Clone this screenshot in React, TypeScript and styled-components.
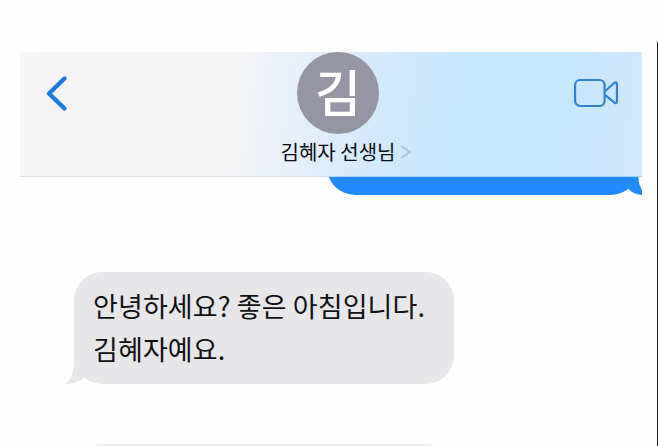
import React from "react";
import styled, { createGlobalStyle } from "styled-components";

const GlobalStyle = createGlobalStyle`
  * {
    box-sizing: border-box;
  }
  body {
    margin: 0;
    background: #fefefe;
    font-family: "Noto Sans CJK KR", "Noto Sans", sans-serif;
  }
`;

const Page = styled.div`
  display: flex;
  justify-content: space-between;
  width: 658px;
  height: 446px;
  padding-left: 20px;
  overflow: hidden;
`;

const Phone = styled.main`
  width: 622px;
  padding-top: 52px;
`;

const Edge = styled.div`
  width: 1px;
  margin-top: 42px;
  background: #29292b;
`;

const Header = styled.header`
  display: grid;
  grid-template-columns: 253px 130px 1fr;
  height: 124px;
  background: linear-gradient(
    97deg,
    #f5f5f5 0%,
    #f4f4f5 34%,
    #e6effa 45%,
    #d3eafd 57%,
    #c7e7ff 69%,
    #c7e7ff 88%,
    #d1e8fe 100%
  );
`;

//파란 말풍선 쪽으로 갈수록 옅어지는 구분선
const Divider = styled.div`
  height: 1px;
  background: linear-gradient(90deg, #dededf 0%, #d8dce2 48%, #a9cff6 52%);
`;

const IconButton = styled.button<{ $align: "start" | "end" }>`
  display: flex;
  justify-self: ${(props) => props.$align};
  align-self: start;
  padding: 0;
  border: 0;
  background: none;
  margin: ${(props) =>
    props.$align === "start" ? "23px 0 0 25px" : "24px 22px 0 0"};
`;

const Contact = styled.div`
  display: flex;
  flex-direction: column;
  align-items: center;
`;

const Avatar = styled.div`
  display: flex;
  justify-content: center;
  width: 82px;
  height: 82px;
  border-radius: 50%;
  background: #9695a3;
  color: #fff;
  font-size: 50px;
  font-weight: 500;
  line-height: 77px;
`;

const ContactName = styled.div`
  display: flex;
  align-items: center;
  gap: 5px;
  margin-left: 16px;
  color: #0b0d10;
  font-size: 20px;
  line-height: 36px;
  white-space: nowrap;
`;

const SentClip = styled.div`
  display: flex;
  align-items: flex-start;
  height: 20px;
  padding-left: 307px;
  overflow: hidden;
`;

const SentBubble = styled.div`
  flex: none;
  width: 312px;
  height: 56px;
  margin-top: -38px;
  border-radius: 28px;
  background: #218bfd;
`;

const SentTail = styled.svg`
  flex: none;
  margin-left: -14px;
`;

const Received = styled.div`
  display: flex;
  align-items: flex-end;
  margin: 75px 0 0 45px;
`;

const ReceivedTail = styled.svg`
  flex: none;
  margin-right: -15px;
`;

const ReceivedBubble = styled.p`
  width: 380px;
  height: 112px;
  margin: 0;
  padding: 12px 19px;
  border-radius: 28px;
  background: #e7e7e9;
  color: #111113;
  font-size: 27px;
  line-height: 43px;
  letter-spacing: 0.1px;
  white-space: nowrap;
`;

const NextBubble = styled.div`
  width: 380px;
  height: 60px;
  margin: 60px 0 0 54px;
  border-radius: 28px;
  background: #ededee;
`;

const App = () => {
  return (
    <Page>
      <GlobalStyle />
      <Phone>
        <Header>
          <IconButton $align="start" aria-label="뒤로">
            <svg width="24" height="38" viewBox="0 0 24 38" fill="none">
              <path
                d="M19.5 3.5L4 18.5L19.5 33.5"
                stroke="#1c7be0"
                strokeWidth="4.4"
                strokeLinecap="round"
                strokeLinejoin="round"
              />
            </svg>
          </IconButton>
          <Contact>
            <Avatar>김</Avatar>
            <ContactName>
              김혜자 선생님
              <svg width="11" height="14" viewBox="0 0 11 14" fill="none">
                <path d="M1 1L10 7L1 13" stroke="#b4bfcb" strokeWidth="1.8" />
              </svg>
            </ContactName>
          </Contact>
          <IconButton $align="end" aria-label="영상 통화">
            <svg
              width="46"
              height="34"
              viewBox="0 0 46 34"
              fill="none"
              stroke="#2e83d3"
              strokeWidth="2.2"
              strokeLinejoin="round"
            >
              <rect x="1.1" y="4" width="29.5" height="26" rx="5" />
              <path d="M31 15.2L40.5 6.8Q42.9 5.5 42.9 8V25.5Q42.9 28 40.5 26.7L31 18.8" />
            </svg>
          </IconButton>
        </Header>
        <Divider />
        <SentClip>
          <SentBubble />
          <SentTail width="22" height="18" viewBox="0 0 22 18">
            <path
              d="M0 0H13.5C13.5 6 15 13 22 18C13 18.5 7 16 3 11.5Z"
              fill="#218bfd"
            />
          </SentTail>
        </SentClip>
        <Received>
          <ReceivedTail width="24" height="26" viewBox="0 0 24 26">
            <path
              d="M9 0C9 12 8 21 0 25.5C8 26.5 15 24 20 19L24 0Z"
              fill="#e7e7e9"
            />
          </ReceivedTail>
          <ReceivedBubble>
            안녕하세요? 좋은 아침입니다.
            <br />
            김혜자예요.
          </ReceivedBubble>
        </Received>
        <NextBubble />
      </Phone>
      <Edge />
    </Page>
  );
};

export default App;
